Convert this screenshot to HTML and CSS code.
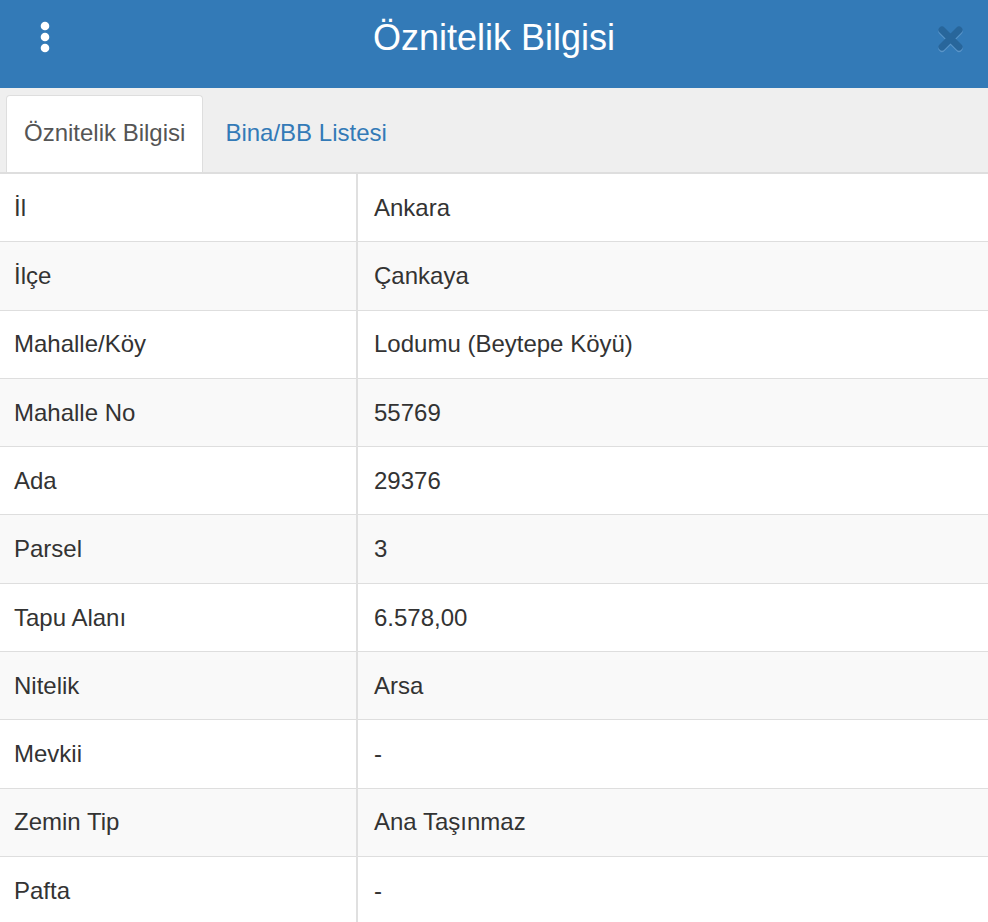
FILE: index.html
```html
<!DOCTYPE html>
<html lang="tr">
<head>
<meta charset="utf-8">
<title>Öznitelik Bilgisi</title>
<link rel="stylesheet" href="styles.css">
</head>
<body>
<div class="panel">
  <header class="header">
    <button class="menu-btn" aria-label="Menü">
      <svg width="12" height="34" viewBox="0 0 12 34"><circle cx="6" cy="5" r="4.3" fill="#fff"/><circle cx="6" cy="16" r="4.3" fill="#fff"/><circle cx="6" cy="27" r="4.3" fill="#fff"/></svg>
    </button>
    <h1 class="title">Öznitelik Bilgisi</h1>
    <button class="close-btn" aria-label="Kapat">
      <svg width="27" height="28" viewBox="0 0 27 28">
        <g stroke-width="7" stroke-linecap="round">
          <path d="M5 6.5 L22 23.5 M22 6.5 L5 23.5" stroke="#5a95c9"/>
          <path d="M5 5 L22 22 M22 5 L5 22" stroke="#28669b"/>
        </g>
      </svg>
    </button>
  </header>
  <nav class="tabs">
    <a class="tab active">Öznitelik Bilgisi</a>
    <a class="tab">Bina/BB Listesi</a>
  </nav>
  <table class="attrs">
    <tbody>
      <tr><td class="key">İl</td><td class="val">Ankara</td></tr>
      <tr><td class="key">İlçe</td><td class="val">Çankaya</td></tr>
      <tr><td class="key">Mahalle/Köy</td><td class="val">Lodumu (Beytepe Köyü)</td></tr>
      <tr><td class="key">Mahalle No</td><td class="val">55769</td></tr>
      <tr><td class="key">Ada</td><td class="val">29376</td></tr>
      <tr><td class="key">Parsel</td><td class="val">3</td></tr>
      <tr><td class="key">Tapu Alanı</td><td class="val">6.578,00</td></tr>
      <tr><td class="key">Nitelik</td><td class="val">Arsa</td></tr>
      <tr><td class="key">Mevkii</td><td class="val">-</td></tr>
      <tr><td class="key">Zemin Tip</td><td class="val">Ana Taşınmaz</td></tr>
      <tr><td class="key">Pafta</td><td class="val">-</td></tr>
    </tbody>
  </table>
</div>
</body>
</html>
```
FILE: styles.css
```css
html, body {
  margin: 0;
  padding: 0;
  overflow: hidden;
  background: #fff;
}
body {
  font-family: "Liberation Sans", Arial, Helvetica, sans-serif;
  color: #333;
}
.panel {
  width: 988px;
}
.header {
  height: 88px;
  background: #337ab7;
  display: flex;
  align-items: flex-start;
}
.menu-btn {
  background: none;
  border: 0;
  padding: 0;
  margin: 21px 0 0 39px;
  width: 12px;
  height: 34px;
  display: block;
}
.menu-btn svg { display: block; }
.title {
  flex: 1;
  margin: 0;
  padding-top: 17px;
  text-align: center;
  color: #fff;
  font-size: 36px;
  font-weight: normal;
  line-height: 41px;
}
.close-btn {
  background: none;
  border: 0;
  padding: 0;
  margin: 25px 24px 0 0;
  width: 27px;
  height: 28px;
  display: block;
}
.close-btn svg { display: block; }
.tabs {
  background: #efefef;
  border-bottom: 2px solid #dedede;
  display: flex;
  align-items: flex-end;
  padding: 7px 0 0 6px;
  height: 77px;
}
.tab {
  display: block;
  font-size: 24px;
  line-height: 34px;
  padding: 20px 17px 22px 17px;
  color: #337ab7;
  border: 1px solid transparent;
  border-bottom: 0;
  border-radius: 4px 4px 0 0;
  margin-right: 4px;
}
.tab.active {
  background: #fff;
  color: #555;
  border-color: #dedede;
}
.attrs {
  width: 100%;
  border-collapse: collapse;
}
.attrs td {
  font-size: 24px;
  line-height: 34px;
  padding: 16.9px 15px 16.4px;
  border-bottom: 1px solid #dedede;
  vertical-align: middle;
}
.attrs tr:nth-child(even) td {
  background: #f9f9f9;
}
.attrs .key {
  width: 327px;
  padding-left: 14px;
  border-right: 2px solid #e0e0e0;
}
.attrs .val {
  padding-left: 16px;
}
```
